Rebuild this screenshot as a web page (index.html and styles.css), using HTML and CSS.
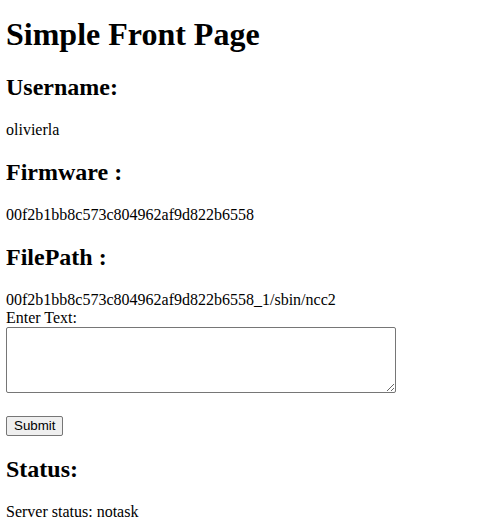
FILE: index.html
```html
<!DOCTYPE html>
<html>
<head>
<meta charset="utf-8">
<title>Simple Front Page</title>
<link rel="stylesheet" href="styles.css">
</head>
<body>
<h1 class="title">Simple Front Page</h1>
<h2>Username:</h2>
<p>olivierla</p>
<h2>Firmware :</h2>
<p>00f2b1bb8c573c804962af9d822b6558</p>
<h2>FilePath :</h2>
<form class="form">
<div>00f2b1bb8c573c804962af9d822b6558_1/sbin/ncc2</div>
<label for="t">Enter Text:</label><br>
<textarea id="t" class="text"></textarea><br><br>
<input type="submit" value="Submit" class="btn">
</form>
<h2>Status:</h2>
<p>Server status: notask</p>
</body>
</html>
```
FILE: styles.css
```css
body {
  font-family: "Liberation Serif", "Times New Roman", serif;
  font-size: 16px;
  margin: 0 6px 8px;
  color: #000;
  background: #fff;
}
.title {
  margin-top: 16px;
}
.form {
  margin: 0;
}
.text {
  width: 390px;
  height: 66px;
  box-sizing: border-box;
  border: 1px solid #767676;
  border-radius: 2px;
  padding: 2px;
  font-family: "Liberation Mono", monospace;
  font-size: 13.33px;
  vertical-align: bottom;
  margin: 0 0 5px;
}
.btn {
  font-family: "Liberation Sans", Arial, sans-serif;
  font-size: 13.33px;
  height: 20px;
  padding: 1px 7px;
  border: 1px solid #767676;
  border-radius: 2px;
  background: #efefef;
  color: #000;
  margin: 0;
}
```
